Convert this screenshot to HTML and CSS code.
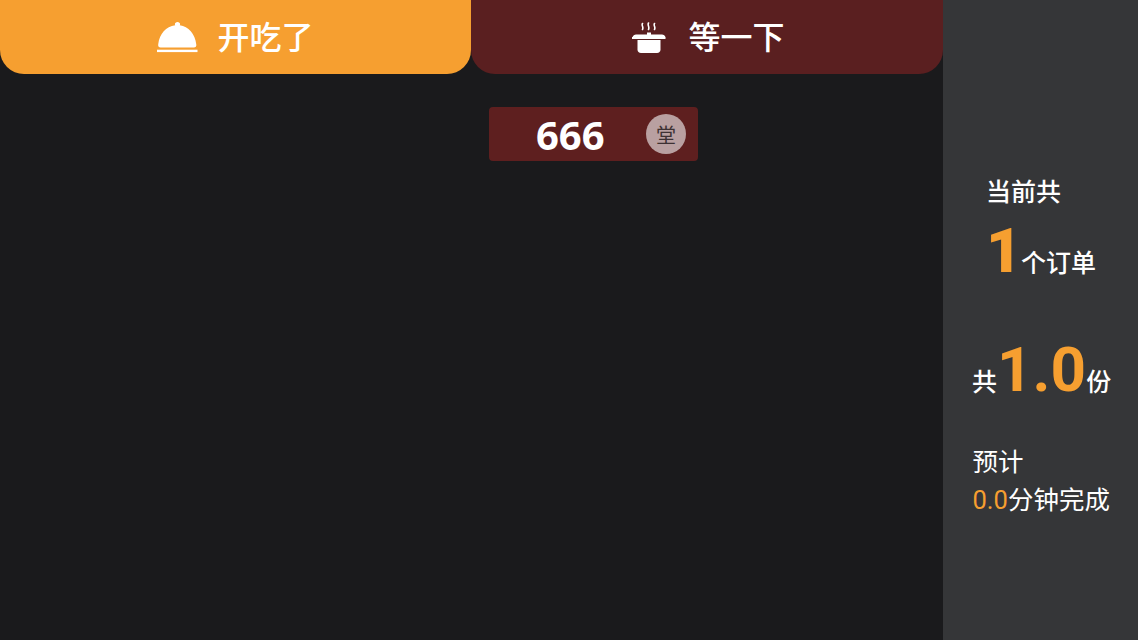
FILE: index.html
```html
<!DOCTYPE html>
<html lang="en">
<head>
    <meta charset="UTF-8">
    <meta name="viewport" content="width=device-width, initial-scale=1.0">
    <title>开吃了</title>
    <link rel="stylesheet" href="styles.css">
</head>
<body>
    <div class="main">
        <div class="tabs">
            <div class="tab tab-active">
                <!-- cloche -->
                <svg class="tab-icon" width="41" height="32" viewBox="0 0 41 32">
                    <path fill="#fff" d="M20.500 0c1.500 0 2.600 1 2.600 2.200 0 .4-.1.700-.3 1C31.500 4.300 38 11.500 39.300 22.500c.3 2-.7 3-2.400 3H3.600c-1.700 0-2.700-1-2.400-3C2.500 11.500 9 4.300 18.200 3.200c-.2-.3-.3-.6-.3-1C17.900 1 19 0 20.500 0z"/>
                    <rect fill="#fff" x="0" y="27.700" width="40.500" height="2.400"/>
                </svg>
                <span>开吃了</span>
            </div>
            <div class="tab tab-wait">
                <!-- steaming pot -->
                <svg class="tab-icon" width="34" height="32" viewBox="0 0 34 32">
                    <path fill="none" stroke="#fff" stroke-width="1.600" stroke-linecap="round" d="M10.500 1.500c-1.400 2 1.400 3.500 0 6M16.500 1c-1.400 2.200 1.400 4 0 6.500M22.500 1.500c-1.400 2 1.400 3.500 0 6"/>
                    <path fill="#fff" d="M15 10.500h4v2h11c1.500 0 3 1 3.500 2.800H.5C1 13.500 2.500 12.500 4 12.500h11z"/>
                    <rect fill="#fff" x="0" y="15" width="33.500" height="2"/>
                    <path fill="#fff" d="M5.500 18h23v9.500c0 2.200-1.400 3.500-3.500 3.500H9c-2.100 0-3.500-1.300-3.500-3.500z"/>
                </svg>
                <span>等一下</span>
            </div>
        </div>
        <div class="orders">
            <div class="order">
                <span class="order-num">666</span>
                <span class="order-type">堂</span>
            </div>
        </div>
    </div>
    <div class="side">
        <div class="stat-count">
            <div class="stat-label">当前共</div>
            <div class="stat-line"><span class="big-one">1</span><span>个订单</span></div>
        </div>
        <div class="stat-total"><span>共</span><span class="big-total">1.0</span><span>份</span></div>
        <div class="stat-time">
            <div>预计</div>
            <div><span class="accent">0.0</span>分钟完成</div>
        </div>
    </div>
</body>
</html>
```

FILE: styles.css
```css
* {
    box-sizing: border-box;
}
body {
    display: flex;
    width: 1138px;
    height: 640px;
    margin: 0;
    overflow: hidden;
    background-color: #1a1a1c;
    color: white;
    font-family: Roboto, "Noto Sans CJK SC", sans-serif;
}
.main {
    width: 943px;
}
.tabs {
    display: flex;
    height: 74px;
}
.tab {
    display: flex;
    justify-content: center;
    align-items: center;
    padding-bottom: 5px;
    font-size: 32px;
    font-weight: 500;
    font-family: "Noto Sans CJK SC", sans-serif;
    border-radius: 0 0 24px 24px;
}
.tab-icon {
    margin-top: 7px;
}
.tab-active {
    width: 471px;
    gap: 19px;
    background-color: #f69f30;
}
.tab-wait {
    width: 472px;
    gap: 22px;
    padding-left: 3px;
    background-color: #5a1f20;
}
.orders {
    padding: 33px 0 0 489px;
}
.order {
    display: flex;
    align-items: center;
    justify-content: space-between;
    width: 209px;
    height: 54px;
    padding: 0 12px 0 47px;
    background-color: #5e1f1f;
    border-radius: 4px;
}
.order-num {
    font-family: "Open Sans", sans-serif;
    font-size: 40px;
    font-weight: 700;
}
.order-type {
    display: flex;
    justify-content: center;
    align-items: center;
    width: 40px;
    height: 40px;
    border-radius: 50%;
    background-color: #b9a0a1;
    color: #3d3133;
    font-size: 20px;
    font-family: "Noto Sans CJK SC", sans-serif;
}
.side {
    width: 195px;
    padding-top: 175px;
    background-color: #353638;
    font-size: 25px;
    font-weight: 500;
}
.stat-count {
    padding-left: 43px;
}
.stat-label {
    line-height: 36px;
}
.stat-line {
    display: flex;
    align-items: baseline;
    margin-top: 5px;
    height: 70px;
}
.big-one {
    margin-right: -1px;
    color: #f69f30;
    font-size: 62px;
    font-weight: 900;
    line-height: 70px;
}
.stat-total {
    display: flex;
    align-items: baseline;
    padding: 49px 0 0 29px;
    height: 122px;
}
.big-total {
    color: #f69f30;
    font-size: 62px;
    font-weight: 700;
    line-height: 70px;
}
.stat-time {
    padding: 35px 0 0 29.500px;
    font-size: 25.500px;
    font-weight: 400;
    line-height: 38px;
}
.accent {
    color: #f69f30;
}
```
